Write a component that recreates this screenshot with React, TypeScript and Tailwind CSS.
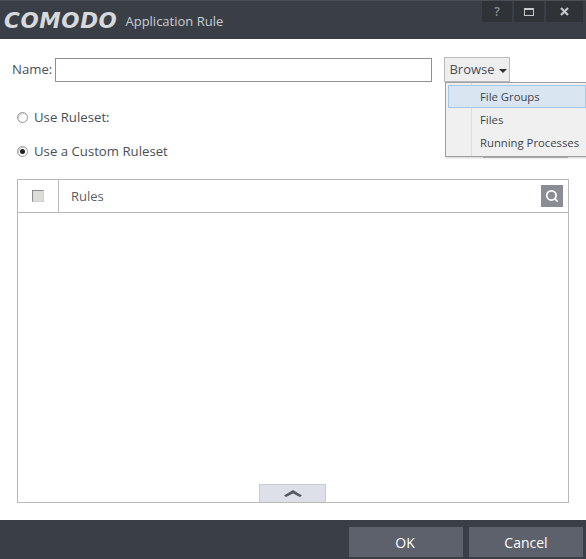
import { Search } from 'lucide-react'

const MENU_ITEMS = ['File Groups', 'Files', 'Running Processes']

function Radio({ checked, label }: { checked?: boolean; label: string }) {
  return (
    <label className="flex items-center gap-[6px] h-5 text-[13.2px] text-[#4a4f57]">
      <span className="w-[11px] h-[11px] rounded-full border border-[#9a9a9a] bg-white shadow-[inset_1px_1px_1px_#ccc] flex items-center justify-center">
        {checked && <span className="w-[5px] h-[5px] rounded-full bg-[#222]" />}
      </span>
      <span className="mt-[2px]">{label}</span>
    </label>
  )
}

export default function App() {
  return (
    <div className="w-[586px] h-[559px] bg-white flex flex-col font-['Open_Sans',sans-serif] overflow-hidden relative">
      {/* Title bar */}
      <div className="h-[39px] bg-[#3a3f47] border-t border-[#4a4e55] flex justify-between pl-1 pr-[3px]">
        <div className="flex items-center gap-[8px] pt-[1px]">
          <span className="font-['DejaVu_Sans',sans-serif] italic font-bold text-[21.5px] tracking-[0.6px] leading-none text-[#d6d8da]">COMODO</span>
          <span className="text-[13px] text-[#c9ccd0] mt-[2px]">Application Rule</span>
        </div>
        <div className="flex gap-0.5 h-[21px]">
          <div className="w-[30px] bg-[#2f3338] flex items-center justify-center text-[12px] font-semibold text-[#8e9196]">?</div>
          <div className="w-[30px] bg-[#2f3338] flex items-center justify-center">
            <span className="w-[10px] h-[8px] border border-t-2 border-[#c6c8cb]" />
          </div>
          <div className="w-[37px] bg-[#2f3338] flex items-center justify-center">
            <svg width="9" height="9" viewBox="0 0 9 9" stroke="#c6c8cb" strokeWidth="2.2"><path d="M1 1l7 7M8 1l-7 7" /></svg>
          </div>
        </div>
      </div>

      {/* Body */}
      <div className="flex-1 flex flex-col pl-[12px] pr-[17px]">
        <div className="flex items-center mt-[18px] h-[25px]">
          <span className="text-[13.2px] text-[#4a4f57] w-[43px]">Name:</span>
          <input className="w-[377px] h-6 border border-[#8f8f8f] bg-white" />
          <button className="ml-3 w-[66px] h-[25px] pl-[2px] bg-[#eeeeee] border border-[#bcbcbc] text-[13px] text-[#4a4f57] flex items-center justify-center gap-[4px]">
            Browse
            <span className="border-x-[4px] border-x-transparent border-t-[4px] border-t-[#333] mt-0.5" />
          </button>
        </div>

        <div className="mt-[25px] ml-[5px] flex flex-col gap-[14px]">
          <Radio label="Use Ruleset:" />
          <div className="relative">
            <Radio checked label="Use a Custom Ruleset" />
            <div className="absolute left-[466px] -top-[4px] w-[85px] h-[21px] border border-[#c4c4c4] bg-white" />
          </div>
        </div>

        {/* Rules table */}
        <div className="mt-[18px] ml-[5px] w-[552px] h-[324px] border border-[#b9b9b9] flex flex-col">
          <div className="h-[33px] border-b border-[#b9b9b9] flex items-center shrink-0">
            <div className="w-[41px] h-full border-r border-[#b9b9b9] flex items-center justify-center">
              <span className="w-3 h-3 bg-[#dcdcd8] border border-[#8c8c8c] border-r-[#d0d0cc] border-b-[#d0d0cc]" />
            </div>
            <span className="ml-3 mt-[2px] text-[13px] text-[#5a5f66]">Rules</span>
            <div className="ml-auto mr-[5px] w-[22px] h-[22px] bg-[#8a8d94] flex items-center justify-center">
              <Search size={14} strokeWidth={3} color="#fff" />
            </div>
          </div>
          <div className="flex-1 flex flex-col justify-end pl-[241px]">
            <div className="w-[67px] h-[18px] bg-[#dde0e8] border border-b-0 border-[#c8ccd4] flex items-center justify-center">
              <svg width="20" height="8" viewBox="0 0 20 8" fill="#555a62"><path d="M10 0l9 5.5-2 1.5-7-3.5L3 7 1 5.5z" /></svg>
            </div>
          </div>
        </div>
      </div>

      {/* Footer */}
      <div className="h-[39px] bg-[#3a3f47] flex justify-end items-start gap-[6px] pt-[7px] pr-[3px]">
        <button className="w-[114px] h-[30px] bg-[#5c616c] text-white text-[14px] pr-[2px]">OK</button>
        <button className="w-[114px] h-[30px] bg-[#5c616c] text-white text-[14px]">Cancel</button>
      </div>

      {/* Browse dropdown */}
      <div className="absolute left-[445px] top-[82px] w-[142px] h-[75px] bg-[#f0f0f0] border border-[#a0a0a0] p-[2px] pr-0 shadow-[1px_1px_2px_rgba(0,0,0,0.2)]">
        <div className="absolute left-[25px] top-0 bottom-0 w-px bg-[#dcdcdc]" />
        {MENU_ITEMS.map((item, i) => (
          <div
            key={item}
            className={`h-[23px] pt-[2px] flex items-center text-[11.3px] text-[#3f444b] relative ${i === 0 ? 'bg-[#d9e5f1] border border-[#a5c8ea] pl-[31px]' : 'pl-[32px]'}`}
          >
            {item}
          </div>
        ))}
      </div>
    </div>
  )
}
